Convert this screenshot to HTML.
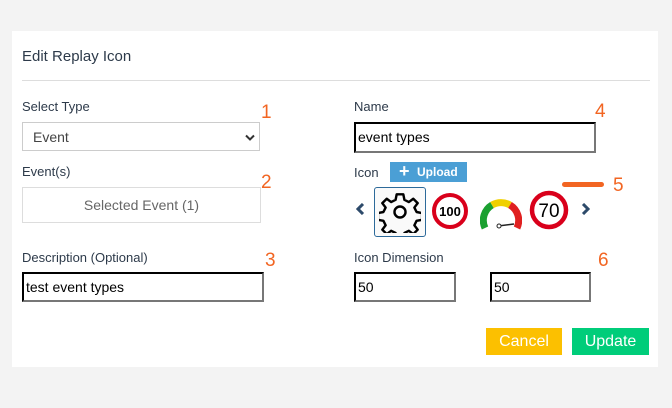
<!DOCTYPE html>
<html><head><style>
body{margin:0;width:672px;height:408px;background:#f3f3f3;font-family:"Liberation Sans",sans-serif;position:relative;overflow:hidden}
.p{position:absolute;left:12px;top:31px;width:646px;height:336px;background:#fff}
.a{position:absolute}
.lbl{font-size:13px;color:#2d3a4a}
.num{font-size:19px;color:#f26522}
.inp{position:absolute;box-sizing:border-box;border:2px inset #767676;border-top-color:#222;border-left-color:#222;border-right-color:#777;border-bottom-color:#777;font-size:14px;color:#000;padding:5px 0 0 2px;background:#fff}
</style></head><body>
<div class="p"></div>
<div class="a" style="left:22px;top:48px;font-size:15px;color:#2d3a4a">Edit Replay Icon</div>
<div class="a" style="left:22px;top:80px;width:628px;height:1px;background:#ddd"></div>

<div class="a lbl" style="left:22px;top:99px">Select Type</div>
<div class="a" style="left:22px;top:122px;width:238px;height:29px;box-sizing:border-box;border:1px solid #ccc;font-size:14px;color:#444;padding:6px 0 0 10px">Event
<svg class="a" style="left:222px;top:11px" width="10" height="7" viewBox="0 0 10 7"><path d="M1 1.5L5 5.5L9 1.5" stroke="#333" stroke-width="2" fill="none"/></svg></div>
<div class="a num" style="left:261px;top:102px">1</div>

<div class="a lbl" style="left:22px;top:164px">Event(s)</div>
<div class="a" style="left:22px;top:187px;width:239px;height:36px;box-sizing:border-box;border:1px solid #ddd;font-size:14px;color:#666;text-align:center;line-height:34px">Selected Event (1)</div>
<div class="a num" style="left:261px;top:172px">2</div>

<div class="a lbl" style="left:22px;top:250px">Description (Optional)</div>
<div class="inp" style="left:22px;top:272px;width:242px;height:30px">test event types</div>
<div class="a num" style="left:265px;top:250px">3</div>

<div class="a lbl" style="left:354px;top:99px">Name</div>
<div class="inp" style="left:354px;top:122px;width:242px;height:31px">event types</div>
<div class="a num" style="left:595px;top:101px">4</div>

<div class="a lbl" style="left:354px;top:165px">Icon</div>
<div class="a" style="left:390px;top:162px;width:77px;height:20px;background:#4b9fd5;color:#fff;font-size:12px;font-weight:bold;line-height:20px"><span style="font-size:18px;position:absolute;left:9px;top:-1px">+</span><span style="position:absolute;left:27px">Upload</span></div>
<div class="a" style="left:562px;top:182px;width:42px;height:5px;background:#f26522;border-radius:3px"></div>
<div class="a num" style="left:613px;top:175px">5</div>

<svg class="a" style="left:356px;top:203px" width="10" height="12" viewBox="0 0 10 12"><path d="M7 1L2 6L7 11" stroke="#2d4a6a" stroke-width="3" fill="none"/></svg>
<div class="a" style="left:374px;top:187px;width:52px;height:50px;box-sizing:border-box;border:1px solid #2d6a9a;border-radius:3px;background:#fafafa"></div>
<svg class="a" style="left:379px;top:191px" width="42" height="42" viewBox="0 0 38 38">
<path d="M16 3h6l1 5 4 2 4-3 4 4-3 4 2 4 5 1v6l-5 1-2 4 3 4-4 4-4-3-4 2-1 5h-6l-1-5-4-2-4 3-4-4 3-4-2-4-5-1v-6l5-1 2-4-3-4 4-4 4 3 4-2z" fill="none" stroke="#000" stroke-width="2.2" stroke-linejoin="round"/>
<circle cx="19" cy="19" r="5" fill="none" stroke="#000" stroke-width="2.2"/></svg>
<svg class="a" style="left:431px;top:192px" width="38" height="38"><circle cx="19" cy="19" r="16" fill="#fff" stroke="#d9001b" stroke-width="4"/><text x="19" y="24" font-size="13" font-weight="bold" text-anchor="middle" font-family="Liberation Sans">100</text></svg>
<svg class="a" style="left:480px;top:192px" width="42" height="42" viewBox="0 0 42 42">
<path d="M5 36A18 18 0 0 1 12 13" stroke="#1aa030" stroke-width="7" fill="none"/>
<path d="M12 13A18 18 0 0 1 30 13" stroke="#f0d000" stroke-width="7" fill="none"/>
<path d="M30 13A18 18 0 0 1 37 36" stroke="#e02020" stroke-width="7" fill="none"/>
<path d="M18 34L34 32" stroke="#222" stroke-width="1.5"/><circle cx="19" cy="34" r="2" fill="#fff" stroke="#222"/></svg>
<svg class="a" style="left:529px;top:190px" width="40" height="40"><circle cx="20" cy="20" r="17" fill="#fff" stroke="#d9001b" stroke-width="4.5"/><text x="20" y="27" font-size="19" text-anchor="middle" font-family="Liberation Sans">70</text></svg>
<svg class="a" style="left:580px;top:203px" width="10" height="12" viewBox="0 0 10 12"><path d="M3 1L8 6L3 11" stroke="#2d4a6a" stroke-width="3" fill="none"/></svg>

<div class="a lbl" style="left:354px;top:250px">Icon Dimension</div>
<div class="inp" style="left:354px;top:272px;width:102px;height:30px">50</div>
<div class="inp" style="left:490px;top:272px;width:101px;height:30px">50</div>
<div class="a num" style="left:598px;top:250px">6</div>

<div class="a" style="left:486px;top:328px;width:76px;height:27px;background:#fcc000;color:#fff;font-size:16px;text-align:center;line-height:27px">Cancel</div>
<div class="a" style="left:572px;top:328px;width:77px;height:27px;background:#00cd7a;color:#fff;font-size:16px;text-align:center;line-height:27px">Update</div>
</body></html>
